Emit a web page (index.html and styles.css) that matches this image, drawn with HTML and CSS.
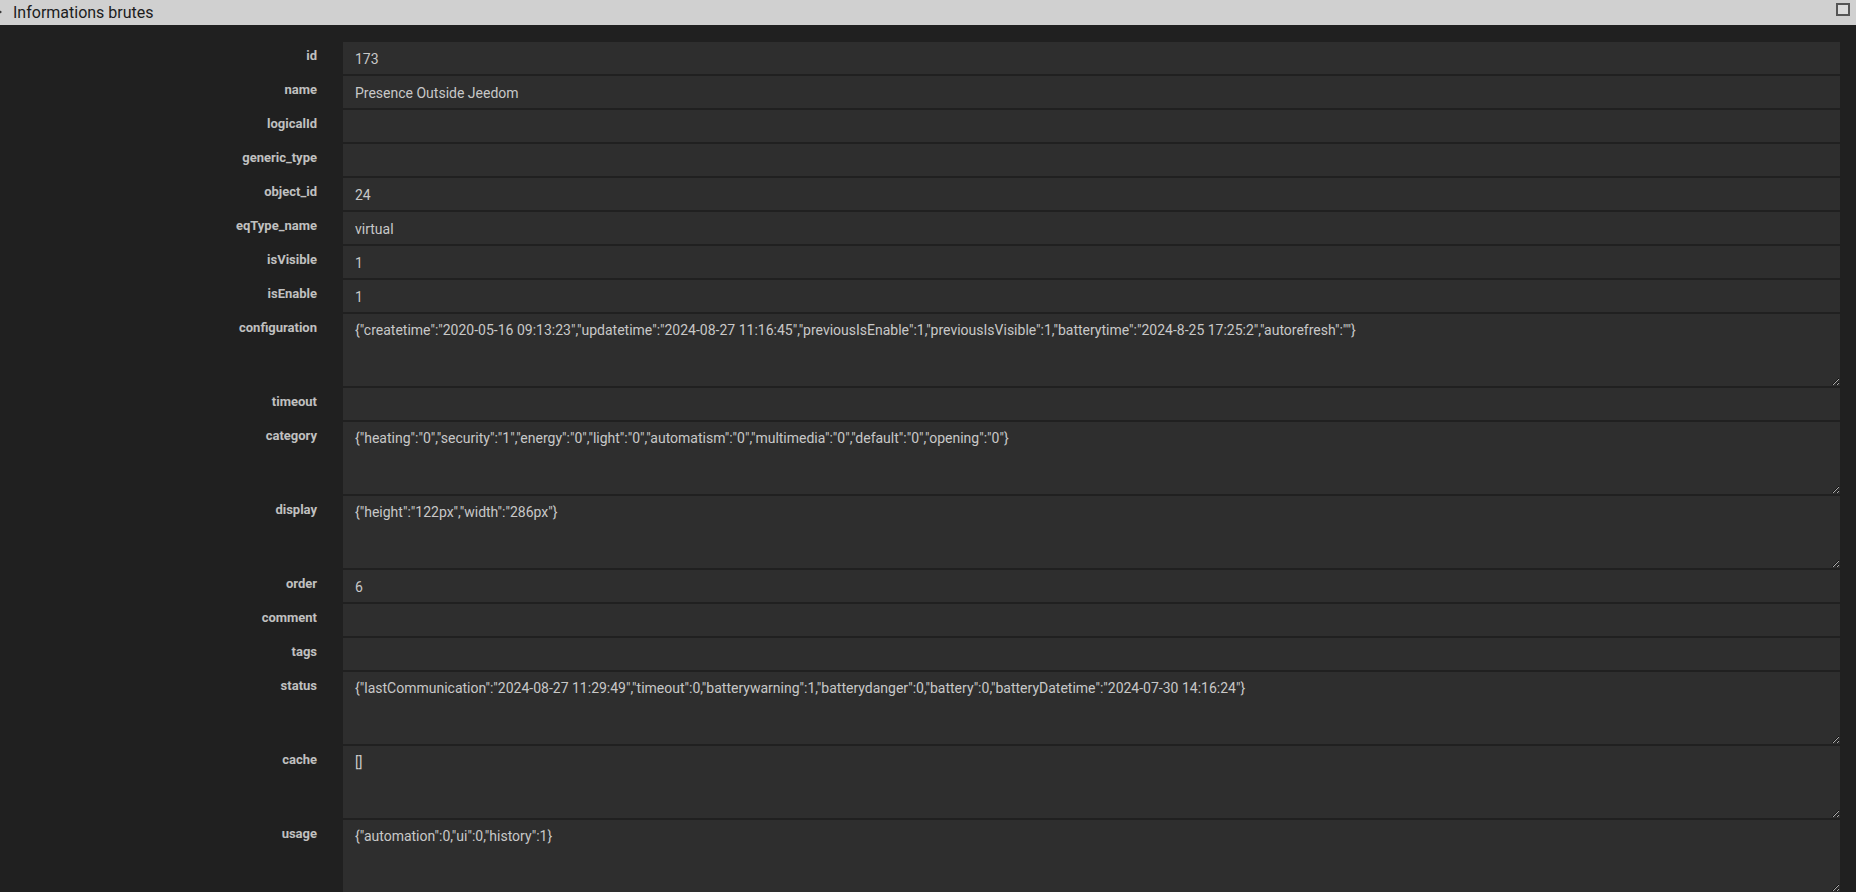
FILE: index.html
```html
<!DOCTYPE html>
<html lang="fr">
<head>
    <meta charset="UTF-8">
    <title>Informations brutes</title>
    <link rel="stylesheet" href="styles.css">
</head>
<body>
    <div class="panel">
        <div class="panel-heading">
            <span class="caret"></span>
            <span class="panel-title">Informations brutes</span>
            <span class="maximize"></span>
        </div>
        <form class="panel-body">
            <div class="form-row"><label>id</label><div class="field">173</div></div>
            <div class="form-row"><label>name</label><div class="field">Presence Outside Jeedom</div></div>
            <div class="form-row"><label>logicalId</label><div class="field"></div></div>
            <div class="form-row"><label>generic_type</label><div class="field"></div></div>
            <div class="form-row"><label>object_id</label><div class="field">24</div></div>
            <div class="form-row"><label>eqType_name</label><div class="field">virtual</div></div>
            <div class="form-row"><label>isVisible</label><div class="field">1</div></div>
            <div class="form-row"><label>isEnable</label><div class="field">1</div></div>
            <div class="form-row"><label>configuration</label><textarea class="field-area">{"createtime":"2020-05-16 09:13:23","updatetime":"2024-08-27 11:16:45","previousIsEnable":1,"previousIsVisible":1,"batterytime":"2024-8-25 17:25:2","autorefresh":""}</textarea></div>
            <div class="form-row"><label>timeout</label><div class="field"></div></div>
            <div class="form-row"><label>category</label><textarea class="field-area">{"heating":"0","security":"1","energy":"0","light":"0","automatism":"0","multimedia":"0","default":"0","opening":"0"}</textarea></div>
            <div class="form-row"><label>display</label><textarea class="field-area">{"height":"122px","width":"286px"}</textarea></div>
            <div class="form-row"><label>order</label><div class="field">6</div></div>
            <div class="form-row"><label>comment</label><div class="field"></div></div>
            <div class="form-row"><label>tags</label><div class="field"></div></div>
            <div class="form-row"><label>status</label><textarea class="field-area">{"lastCommunication":"2024-08-27 11:29:49","timeout":0,"batterywarning":1,"batterydanger":0,"battery":0,"batteryDatetime":"2024-07-30 14:16:24"}</textarea></div>
            <div class="form-row"><label>cache</label><textarea class="field-area">[]</textarea></div>
            <div class="form-row"><label>usage</label><textarea class="field-area">{"automation":0,"ui":0,"history":1}</textarea></div>
        </form>
    </div>
</body>
</html>
```

FILE: styles.css
```css
html, body {
    margin: 0;
    padding: 0;
    background-color: #202020;
    font-family: Roboto, "Liberation Sans", sans-serif;
    overflow: hidden;
}
.panel-heading {
    position: relative;
    height: 25px;
    background-color: #d0d0d0;
    color: #1c1c1c;
    display: flex;
    align-items: center;
    font-size: 16px;
}
.caret {
    position: absolute;
    left: -2px;
    top: 9px;
    width: 0;
    height: 0;
    border-top: 3px solid transparent;
    border-bottom: 3px solid transparent;
    border-left: 4px solid #333;
}
.panel-title {
    padding-left: 13px;
}
.maximize {
    position: absolute;
    right: 6px;
    top: 3px;
    width: 10px;
    height: 9px;
    border: 2px solid #555;
    background-color: #dcdcdc;
}
.panel-body {
    margin: 0;
    padding: 17px 16px 0 0;
}
.form-row {
    display: grid;
    grid-template-columns: 317px 1fr;
    column-gap: 26px;
    margin-bottom: 2px;
}
.form-row label {
    text-align: right;
    font-size: 13px;
    font-weight: bold;
    line-height: 15px;
    padding-top: 6px;
    color: #c0c0c0;
}
.field {
    height: 32px;
    box-sizing: border-box;
    padding: 7px 12px 5px;
    line-height: 20px;
    font-size: 14px;
    color: #c8c8c8;
    background-color: #2e2e2e;
}
.field-area {
    display: block;
    width: 100%;
    height: 72px;
    box-sizing: border-box;
    margin: 0;
    padding: 6px 12px;
    border: none;
    outline: none;
    line-height: 20px;
    font-family: Roboto, "Liberation Sans", sans-serif;
    font-size: 14px;
    color: #c8c8c8;
    background-color: #2e2e2e;
    color-scheme: dark;
}
```
